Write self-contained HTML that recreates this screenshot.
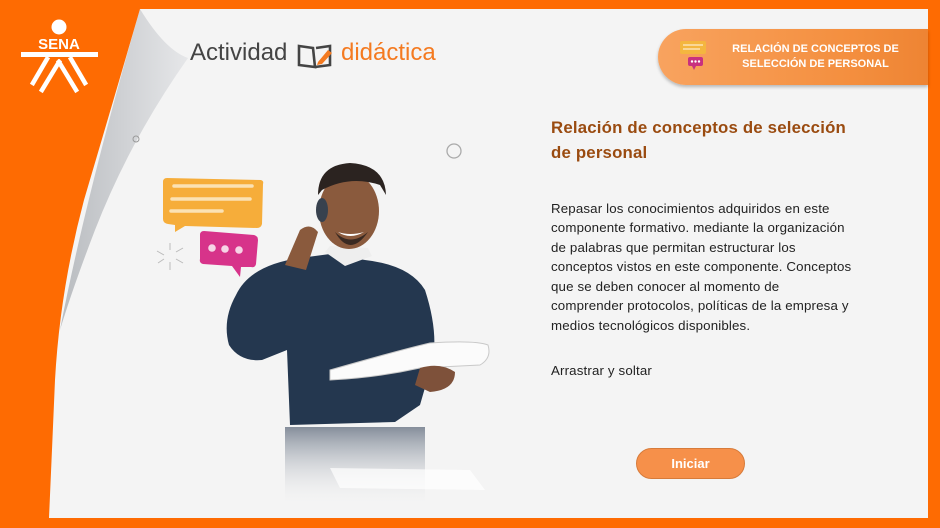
<!DOCTYPE html>
<html><head><meta charset="utf-8"><style>
*{margin:0;padding:0;box-sizing:border-box}
body{width:940px;height:528px;overflow:hidden;background:#fe6b02;font-family:"Liberation Sans",sans-serif;position:relative}
.panel{position:absolute;left:40px;top:9px;width:888px;height:509px;background:#f4f4f4;box-shadow:2px 2px 4px rgba(0,0,0,.25)}
.abs{position:absolute}
.body{left:551px;top:199px;font-size:13.3px;line-height:19.45px;color:#222;white-space:nowrap;letter-spacing:0.15px}
.title{left:551px;top:115px;font-size:16.8px;line-height:25px;font-weight:bold;color:#9a4b10;white-space:nowrap;letter-spacing:0.2px}
.banner{left:658px;top:29px;width:270px;height:56px;border-radius:28px 0 0 28px;background:linear-gradient(90deg,#f8a35f,#f48f3f 70%,#ee8433);box-shadow:0 2px 3px rgba(0,0,0,.25)}
.banner div{position:absolute;left:65px;top:13px;width:185px;text-align:center;color:#fff;font-weight:bold;font-size:11px;line-height:15px}
.btn{left:636px;top:448px;width:109px;height:31px;border-radius:16px;background:#f6904a;border:1px solid #d77b3a;color:#fff;font-weight:bold;font-size:13px;text-align:center;line-height:29px}
</style></head><body>
<div class="panel"></div>
<svg class="abs" style="left:0;top:0" width="940" height="528">
<defs>
<linearGradient id="cg" x1="0" y1="0" x2="1" y2="0"><stop offset="0" stop-color="#b9bcc0"/><stop offset="1" stop-color="#e6e7e9"/></linearGradient>
<linearGradient id="og" x1="0" y1="0" x2="1" y2="0"><stop offset="0.6" stop-color="#fe6b02"/><stop offset="1" stop-color="#d85800"/></linearGradient>
<linearGradient id="fade" x1="0" y1="0" x2="0" y2="1"><stop offset="0" stop-color="#2a3a52" stop-opacity=".55"/><stop offset="1" stop-color="#f4f4f4" stop-opacity="0"/></linearGradient>
</defs>
<path d="M140,9 Q165,50 188,58 Q130,140 95,230 Q72,290 60,330 Q85,200 140,9Z" fill="url(#cg)"/>
<path d="M0,0 L940,0 L940,9 L140,9 Q115,95 84,200 Q60,290 55,380 Q52,450 49,518 L0,528Z" fill="url(#og)"/>
<rect x="0" y="0" width="940" height="9" fill="#fe6b02"/>
<rect x="0" y="518" width="940" height="10" fill="#fe6b02"/>
<rect x="928" y="0" width="12" height="528" fill="#fe6b02"/>
<circle cx="59" cy="27" r="7.5" fill="#fff"/>
<text x="59" y="49" text-anchor="middle" font-family="Liberation Sans" font-weight="bold" font-size="15" fill="#fff">SENA</text>
<rect x="21" y="52" width="77" height="5" fill="#fff"/>
<g stroke="#fff" stroke-width="4.5" stroke-linecap="square">
<line x1="47" y1="59" x2="33" y2="83"/><line x1="59" y1="62" x2="42" y2="90"/><line x1="59" y1="62" x2="76" y2="90"/><line x1="71" y1="59" x2="85" y2="83"/></g>
<circle cx="136" cy="139" r="3" fill="none" stroke="#999" stroke-width="1"/>
<circle cx="454" cy="151" r="7" fill="none" stroke="#aaa" stroke-width="1.3"/>
<g fill="none" stroke="#444" stroke-width="2.6"><path d="M299,46 L313,48 L315,67 L299,65Z"/><path d="M316,48 L330,46 L330,65 L315,67"/></g>
<path d="M318,62 L328,50 L332,53 L322,64 L317,65Z" fill="#f47a20"/>
<path d="M167,178 L261,180 Q264,181 263,184 L262,224 Q261,228 257,228 L185,226 L175,232 L175,225 L168,224 Q163,223 163,219 L163,182 Q163,178 167,178Z" fill="#f6ad3a"/>
<g stroke="#fbe2b4" stroke-width="3.5" stroke-linecap="round"><line x1="174" y1="186" x2="252" y2="186"/><line x1="172" y1="199" x2="250" y2="199"/><line x1="171" y1="211" x2="222" y2="211"/></g>
<path d="M204,231 L254,235 Q258,236 258,240 L256,264 Q255,268 251,267 L241,267 L240,277 L232,266 L203,264 Q199,263 200,259 L200,235 Q200,231 204,231Z" fill="#d7338a"/>
<circle cx="212" cy="248" r="3.8" fill="#f6d4e6"/><circle cx="225" cy="249" r="3.8" fill="#f6d4e6"/><circle cx="239" cy="250" r="3.8" fill="#f6d4e6"/>
<g stroke="#bbb" stroke-width="1"><line x1="170" y1="243" x2="170" y2="250"/><line x1="170" y1="262" x2="170" y2="270"/><line x1="157" y1="251" x2="164" y2="255"/><line x1="176" y1="252" x2="183" y2="248"/><line x1="158" y1="263" x2="164" y2="259"/><line x1="176" y1="259" x2="183" y2="263"/></g>
<path d="M236,295 Q250,265 300,258 L330,254 L365,260 Q410,265 425,290 Q438,330 433,360 L420,405 L395,422 L290,425 L287,350 L262,360 Q240,362 229,345 Q222,320 236,295Z" fill="#24374f"/>
<path d="M325,252 L345,266 L372,256 L368,248 L330,246Z" fill="#eee"/>
<ellipse cx="349" cy="211" rx="30" ry="38" fill="#8a5a3d"/>
<path d="M318,195 Q318,165 350,163 Q385,165 386,195 L380,185 Q350,175 322,190Z" fill="#2b2320"/>
<ellipse cx="322" cy="210" rx="6" ry="12" fill="#37414e"/>
<path d="M335,232 Q350,247 368,232 Q350,258 335,232Z" fill="#3a2a22"/>
<path d="M338,232 Q350,240 364,232 Q350,236 338,232Z" fill="#fff"/>
<path d="M285,265 L300,230 Q310,222 318,232 L306,270Z" fill="#8a5a3d"/>
<path d="M330,370 Q400,350 430,343 Q475,340 488,345 Q492,358 480,365 L420,368 Q375,378 330,380Z" fill="#fbfbfb" stroke="#c9c9c9" stroke-width="1"/>
<path d="M420,368 Q440,362 455,372 Q455,390 430,392 L415,385Z" fill="#7e513a"/>
<rect x="285" y="427" width="140" height="80" fill="url(#fade)"/>
<path d="M330,468 L470,470 L485,490 L340,488Z" fill="#fff" opacity=".7"/>
</svg>
<div class="abs" style="left:190px;top:39px;font-size:24px;color:#444">Actividad</div>
<div class="abs" style="left:341px;top:39px;font-size:24px;color:#f47a20">didáctica</div>
<div class="abs banner">
<svg class="abs" style="left:20px;top:11px" width="30" height="32"><rect x="2" y="1" width="26" height="13" rx="2" fill="#f4b63f"/><line x1="5" y1="5" x2="25" y2="5" stroke="#fbe2b4" stroke-width="1.5"/><line x1="5" y1="9" x2="22" y2="9" stroke="#fbe2b4" stroke-width="1.5"/><rect x="10" y="17" width="15" height="9" rx="2" fill="#c8307f"/><path d="M14,26 L16,30 L18,26Z" fill="#c8307f"/><circle cx="14" cy="21.5" r="1.2" fill="#fff"/><circle cx="17.5" cy="21.5" r="1.2" fill="#fff"/><circle cx="21" cy="21.5" r="1.2" fill="#fff"/></svg>
<div>RELACIÓN DE CONCEPTOS DE<br>SELECCIÓN DE PERSONAL</div></div>
<div class="abs title">Relación de conceptos de selección<br>de personal</div>
<div class="abs body">Repasar los conocimientos adquiridos en este<br>componente formativo. mediante la organización<br>de palabras que permitan estructurar los<br>conceptos vistos en este componente. Conceptos<br>que se deben conocer al momento de<br>comprender protocolos, políticas de la empresa y<br>medios tecnológicos disponibles.</div>
<div class="abs body" style="top:361px">Arrastrar y soltar</div>
<div class="abs btn">Iniciar</div>
</body></html>
